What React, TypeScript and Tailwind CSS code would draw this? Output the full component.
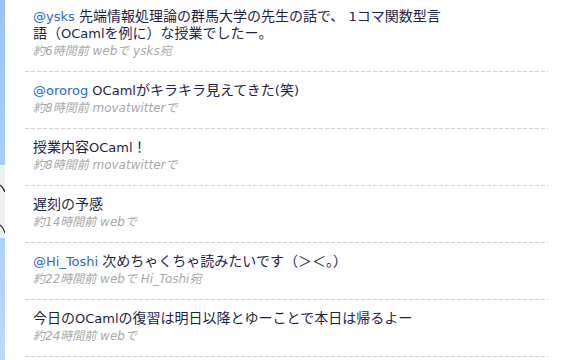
import React from "react";

type Tweet = { reply?: string; text: string; meta: string };

const tweets: Tweet[] = [
  {
    reply: "@ysks",
    text: " 先端情報処理論の群馬大学の先生の話で、 1コマ関数型言語（OCamlを例に）な授業でしたー。",
    meta: "約6時間前 webで ysks宛",
  },
  { reply: "@ororog", text: " OCamlがキラキラ見えてきた(笑)", meta: "約8時間前 movatwitterで" },
  { text: "授業内容OCaml！", meta: "約8時間前 movatwitterで" },
  { text: "遅刻の予感", meta: "約14時間前 webで" },
  { reply: "@Hi_Toshi", text: " 次めちゃくちゃ読みたいです（＞＜。）", meta: "約22時間前 webで Hi_Toshi宛" },
  { text: "今日のOCamlの復習は明日以降とゆーことで本日は帰るよー", meta: "約24時間前 webで" },
];

const cjk = /[\u3000-\u30ff\u4e00-\u9fff\uff00-\uffef]+/g;

function Mixed({ text, big }: { text: string; big: boolean }) {
  const parts: React.ReactNode[] = [];
  let last = 0;
  let m: RegExpExecArray | null;
  let k = 0;
  cjk.lastIndex = 0;
  while ((m = cjk.exec(text))) {
    if (m.index > last) parts.push(<span key={k++}>{text.slice(last, m.index)}</span>);
    parts.push(
      <span key={k++} className={big ? "text-[14px]" : "text-[12px]"}>
        {m[0]}
      </span>
    );
    last = m.index + m[0].length;
  }
  if (last < text.length) parts.push(<span key={k++}>{text.slice(last)}</span>);
  return <>{parts}</>;
}

export default function App() {
  return (
    <div
      className="flex w-[564px] h-[360px] overflow-hidden bg-white"
      style={{ fontFamily: '"DejaVu Sans", "Noto Sans CJK JP", sans-serif' }}
    >
      <div className="flex flex-col w-[5px] h-full">
        <div className="h-[165px] bg-gradient-to-b from-[#98c4f5] to-[#a9cff8]" />
        <div className="h-[73px] bg-[#eef1f3]">
          <svg width="5" height="73" viewBox="0 0 5 73">
            <path d="M0 20 Q3 22 5 27" stroke="#222" strokeWidth="1.2" fill="none" />
            <path d="M0 60 Q3 62 5 68" stroke="#222" strokeWidth="1.2" fill="none" />
          </svg>
        </div>
        <div className="flex-1 bg-gradient-to-b from-[#acd1f9] to-[#bcdafb]" />
      </div>
      <div className="ml-[20px] w-[523px] pt-[8px]">
        {tweets.map((t, i) => (
          <div key={i}>
            <div className={`pl-[8px] pb-[11px] ${i === 0 ? "pt-0" : "pt-[10px]"}`}>
              <p className="w-[416px] text-[13px] leading-[17px] text-[#1e1e48]">
                {t.reply && <span className="text-[#2b66cc]">{t.reply}</span>}
                <Mixed text={t.text} big />
              </p>
              <p className="mt-[1px] text-[12px] leading-[17px] italic text-[#a8a8a8]">{t.meta}</p>
            </div>
            <div className="h-px bg-[repeating-linear-gradient(to_right,#d2d2d2_0_4px,transparent_4px_6px)]" />
          </div>
        ))}
      </div>
    </div>
  );
}
